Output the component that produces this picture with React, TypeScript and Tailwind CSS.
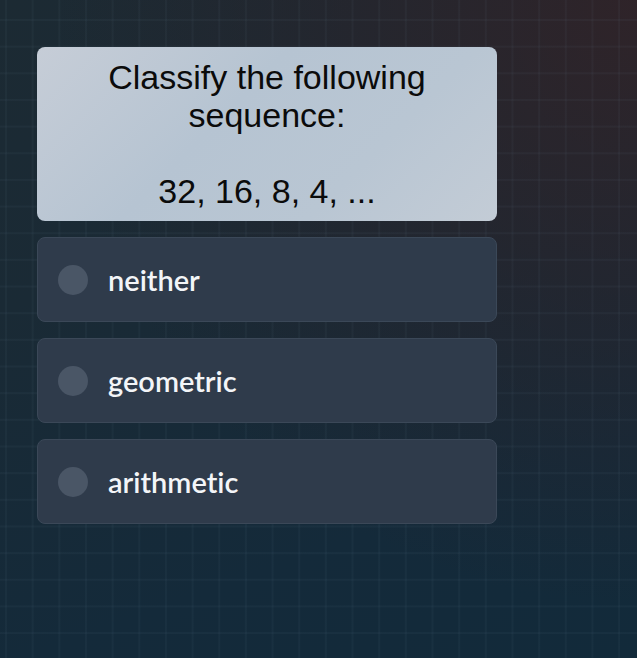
import React from "react";

const options = ["neither", "geometric", "arithmetic"];

export default function App() {
  return (
    <div className="relative w-[637px] h-[658px] overflow-hidden bg-[#16293a]">
      <div className="absolute inset-0 bg-[linear-gradient(160deg,#1c2a33_0%,#1a2a35_35%,#142a3a_75%,#122a3a_100%)]" />
      <div className="absolute inset-0 bg-[radial-gradient(ellipse_at_100%_0%,rgba(52,34,38,0.8)_0%,rgba(45,34,40,0.45)_35%,rgba(40,34,40,0)_65%)]" />
      <div className="absolute inset-0 bg-[linear-gradient(to_right,rgba(120,150,170,0.055)_1.5px,transparent_1.5px),linear-gradient(to_bottom,rgba(120,150,170,0.055)_1.5px,transparent_1.5px)] bg-[length:26.67px_26.67px] bg-[position:5px_19px]" />
      <div className="relative pt-[47px] pl-[37px] flex flex-col gap-4 w-[497px]">
        <div className="w-[460px] rounded-[8px] bg-[linear-gradient(135deg,#c6cdd7_0%,#b6c4d2_40%,#b9c6d3_70%,#c3ccd6_100%)] px-4 py-[11px] text-center text-[34px] leading-[38px] text-[#0b0b0b] font-['Liberation_Sans',Arial,sans-serif]">
          Classify the following sequence:
          <br />
          <br />
          32, 16, 8, 4, ...
        </div>
        {options.map((o) => (
          <div
            key={o}
            className="w-[460px] h-[85px] rounded-[8px] bg-[#2f3b4b] border border-[#3b4858] flex items-center pl-5 gap-5"
          >
            <div className="w-[30px] h-[30px] rounded-full bg-[#4a5666] shrink-0" />
            <span className="text-[29px] text-[#f3f5f8] font-semibold [font-variant-ligatures:none] font-['Lato',sans-serif]">
              {o}
            </span>
          </div>
        ))}
      </div>
    </div>
  );
}
